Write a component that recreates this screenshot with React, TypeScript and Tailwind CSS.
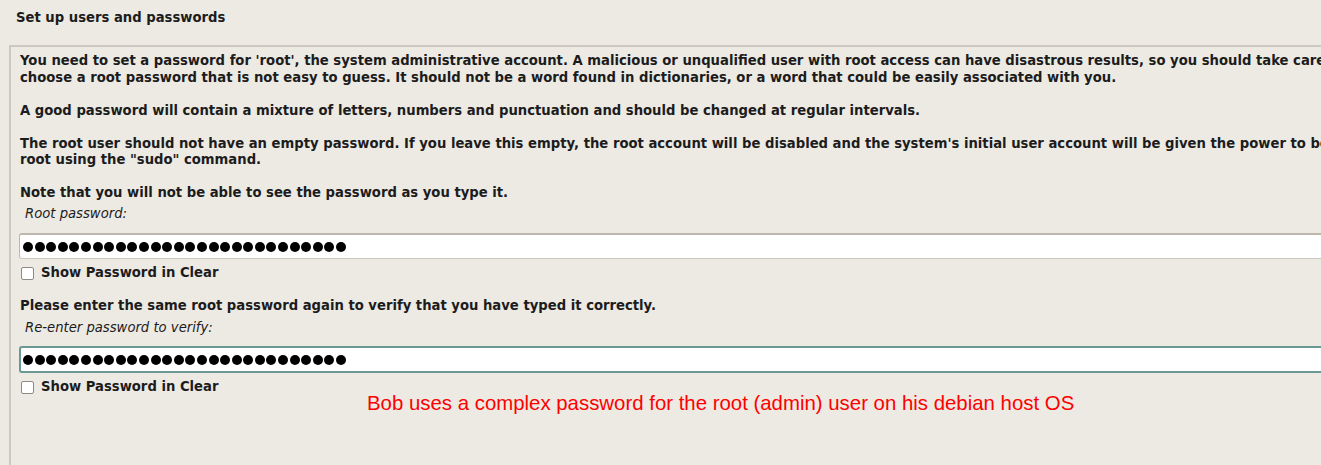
import React from "react";

const Dots = ({ count }: { count: number }) => (
  <div className="flex items-center gap-[1.6px]">
    {Array.from({ length: count }).map((_, i) => (
      <span key={i} className="block w-[10px] h-[10px] rounded-full bg-black" />
    ))}
  </div>
);

const PasswordField = ({ focused }: { focused?: boolean }) => (
  <div
    className={
      focused
        ? "h-[27px] ml-[8px] flex items-center pl-[2px] bg-white rounded-l-[3px] border-2 border-r-0 border-[#6b9893]"
        : "h-[26px] ml-[8px] flex items-center pl-[3px] bg-white rounded-l-[3px] border border-r-0 border-t-2 border-[#bdb7ae] border-b-[#cbc6be]"
    }
  >
    <Dots count={28} />
  </div>
);

const ShowClear = () => (
  <label className="flex items-center gap-[7px] ml-[10px] h-[16px]">
    <span className="block w-[13px] h-[13px] bg-white border border-[#8f8a84] rounded-[2px]" />
    <span className="font-bold">Show Password in Clear</span>
  </label>
);

export default function App() {
  return (
    <div
      className="w-[1321px] h-[465px] overflow-hidden bg-[#edeae4] text-[#1c1c1c] text-[13.2px] leading-[16.5px] whitespace-nowrap"
      style={{ fontFamily: '"DejaVu Sans", sans-serif' }}
    >
      <h1 className="font-bold pl-[16px] pt-[10px] h-[45px]">Set up users and passwords</h1>
      <div className="ml-[9px] border-t-2 border-l-2 border-[#cdc8c0] pt-[6px] h-[420px]">
        <div className="pl-[9px] font-bold">
          <p>
            You need to set a password for 'root', the system administrative account. A malicious or unqualified user with root access can have disastrous results, so you should take care that you
            <br />
            choose a root password that is not easy to guess. It should not be a word found in dictionaries, or a word that could be easily associated with you.
          </p>
          <p className="mt-[16.5px]">
            A good password will contain a mixture of letters, numbers and punctuation and should be changed at regular intervals.
          </p>
          <p className="mt-[16.5px]">
            The root user should not have an empty password. If you leave this empty, the root account will be disabled and the system's initial user account will be given the power to become
            <br />
            root using the "sudo" command.
          </p>
          <p className="mt-[16.5px]">Note that you will not be able to see the password as you type it.</p>
        </div>
        <p className="pl-[14px] mt-[4px] italic">Root password:</p>
        <div className="mt-[11px]">
          <PasswordField />
        </div>
        <div className="mt-[6px]">
          <ShowClear />
        </div>
        <p className="pl-[9px] font-bold mt-[17px]">
          Please enter the same root password again to verify that you have typed it correctly.
        </p>
        <p className="pl-[14px] mt-[5px] italic">Re-enter password to verify:</p>
        <div className="mt-[10px]">
          <PasswordField focused />
        </div>
        <div className="mt-[6px]">
          <ShowClear />
        </div>
        <p
          className="pl-[356px] -mt-[4px] text-[20.4px] leading-[24px] text-[#ff0000]"
          style={{ fontFamily: '"Liberation Sans", Arial, sans-serif' }}
        >
          Bob uses a complex password for the root (admin) user on his debian host OS
        </p>
      </div>
    </div>
  );
}
